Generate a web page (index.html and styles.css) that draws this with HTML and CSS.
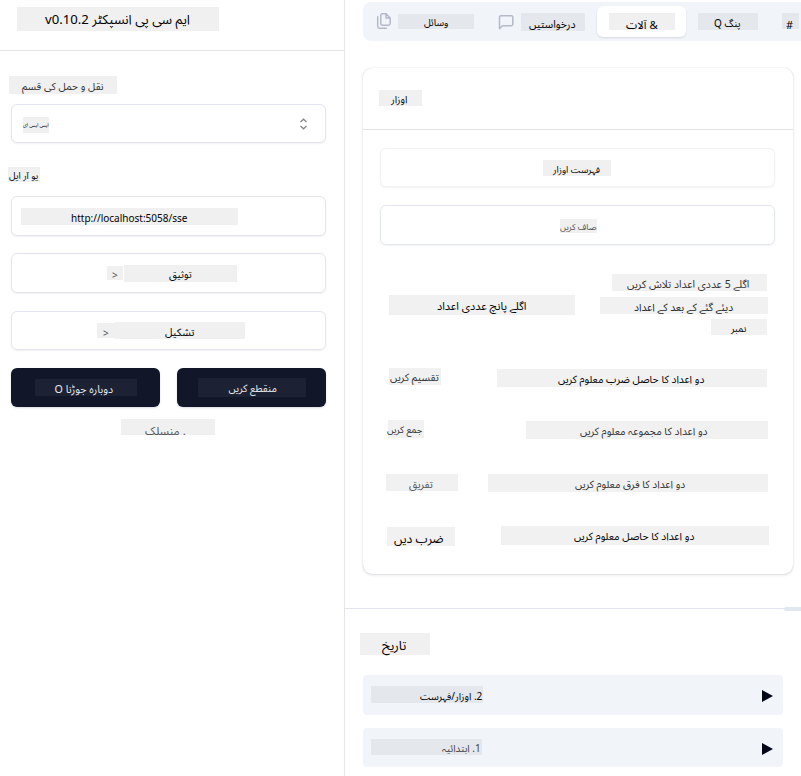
FILE: index.html
```
<!DOCTYPE html>
<html lang="ur">
<head>
<meta charset="utf-8">
<title>ایم سی پی انسپکٹر</title>
<link rel="stylesheet" href="styles.css">
</head>
<body>
<div class="app">
  <aside class="sidebar">
    <header class="side-head"><h1 class="chip c-title"><span dir="rtl">ایم سی پی انسپکٹر v0.10.2</span></h1></header>
    <div class="side-body">
      <div class="chip c-transport"><span dir="rtl">نقل و حمل کی قسم</span></div>
      <div class="field select">
        <div class="chip c-sse"><span dir="rtl">ایس ایس ای</span></div>
        <svg class="chevrons" viewBox="0 0 9 12"><path d="M1.500 4 4.500 1.200 7.500 4M1.500 8 4.500 10.800 7.500 8"/></svg>
      </div>
      <div class="chip c-url"><span dir="rtl">یو آر ایل</span></div>
      <div class="field input"><div class="chip c-addr"><span>http://localhost:5058/sse</span></div></div>
      <div class="field auth"><div class="chip c-gt1"><span>&gt;</span></div><div class="chip c-auth"><span dir="rtl">توثیق</span></div></div>
      <div class="field config"><div class="chip c-gt2"><span>&gt;</span></div><div class="chip c-config"><span dir="rtl">تشکیل</span></div></div>
      <div class="actions">
        <button class="dark"><span class="chip c-reconnect"><span dir="rtl">دوبارہ جوڑنا O</span></span></button>
        <button class="dark"><span class="chip c-disconnect"><span dir="rtl">منقطع کریں</span></span></button>
      </div>
      <div class="chip c-status"><span dir="ltr">منسلک .</span></div>
    </div>
  </aside>
  <main class="main">
    <section class="top">
      <nav class="tabs">
        <svg class="icon files" viewBox="0 0 16 18"><path d="M10 1.700H6.500A1.700 1.700 0 0 0 4.800 3.400v8.200A1.700 1.700 0 0 0 6.500 13.300h6A1.700 1.700 0 0 0 14.200 11.600V6ZM10 1.700V6H14.200M1.700 4.800v9.700A1.700 1.700 0 0 0 3.400 16.200H10.500"/></svg>
        <div class="chip c-resources"><span dir="rtl">وسائل</span></div>
        <svg class="icon message" viewBox="0 0 16 16"><path d="M14.800 10.200A1.500 1.500 0 0 1 13.300 11.700H4.500L1.500 14.700V3.200A1.500 1.500 0 0 1 3 1.700h10.300a1.500 1.500 0 0 1 1.500 1.500Z"/></svg>
        <div class="chip c-prompts"><span dir="rtl">درخواستیں</span></div>
        <div class="tab-active"><div class="chip c-tools"><span dir="ltr">آلات &amp;</span></div></div>
        <div class="chip c-ping"><span dir="rtl">پنگ Q</span></div>
        <div class="chip c-hash"><span>#</span></div>
      </nav>
      <div class="card">
        <div class="card-head"><h2 class="chip c-card"><span dir="rtl">اوزار</span></h2></div>
        <div class="wide list"><div class="chip c-list"><span dir="rtl">فہرست اوزار</span></div></div>
        <div class="wide clear"><div class="chip c-clear"><span dir="rtl">صاف کریں</span></div></div>
        <div class="tool t1">
          <div class="chip c-next"><span dir="rtl">اگلے پانچ عددی اعداد</span></div>
          <div class="desc">
            <div class="chip c-d1a"><span dir="rtl">اگلے 5 عددی اعداد تلاش کریں</span></div>
            <div class="chip c-d1b"><span dir="rtl">دیئے گئے کے بعد کے اعداد</span></div>
            <div class="chip c-d1c"><span dir="rtl">نمبر</span></div>
          </div>
        </div>
        <div class="tool t2"><div class="chip c-n2"><span dir="rtl">تقسیم کریں</span></div><div class="chip c-d2"><span dir="rtl">دو اعداد کا حاصل ضرب معلوم کریں</span></div></div>
        <div class="tool t3"><div class="chip c-n3"><span dir="rtl">جمع کریں</span></div><div class="chip c-d3"><span dir="rtl">دو اعداد کا مجموعہ معلوم کریں</span></div></div>
        <div class="tool t4"><div class="chip c-n4"><span dir="rtl">تفریق</span></div><div class="chip c-d4"><span dir="rtl">دو اعداد کا فرق معلوم کریں</span></div></div>
        <div class="tool t5"><div class="chip c-n5"><span dir="rtl">ضرب دیں</span></div><div class="chip c-d5"><span dir="rtl">دو اعداد کا حاصل معلوم کریں</span></div></div>
      </div>
    </section>
    <section class="history">
      <div class="handle"></div>
      <h2 class="chip c-history"><span dir="rtl">تاریخ</span></h2>
      <div class="entry e1"><div class="chip c-h2"><span dir="rtl">2. اوزار/فہرست</span></div><i class="arrow"></i></div>
      <div class="entry e2"><div class="chip c-h1"><span dir="rtl">1. ابتدائیہ</span></div><i class="arrow"></i></div>
    </section>
  </main>
</div>
</body>
</html>
```
FILE: styles.css
```
* { box-sizing: border-box; margin: 0; }
body { width: 801px; height: 776px; overflow: hidden; background: #fff; color: #000; font-family: "Noto Sans", "Noto Sans Arabic", "DejaVu Sans", sans-serif; font-size: 10px; }
.app { display: flex; height: 776px; }
.sidebar { width: 345px; flex: none; border-right: 1px solid #e2e5f0; }
.main { flex: 1; min-width: 0; }

.chip { display: flex; align-items: center; flex: none; background: #f0f0f0; font-size: 10px; font-weight: 400; line-height: 1; white-space: nowrap; }
.chip > span { display: block; }

.side-head { height: 51px; padding: 7px 0 0 17px; border-bottom: 1px solid #e2e5ec; }
.side-body { padding: 25px 18px 0 8px; }
.field { display: flex; align-items: flex-start; width: 315px; margin-left: 3px; border: 1px solid #e2e5f0; border-radius: 6px; box-shadow: 0 1px 2px rgba(15, 23, 42, .06); }
.select { height: 39px; margin-top: 10px; padding: 12px 0 0 11px; }
.chevrons { width: 9px; height: 12px; margin: 1px 0 0 250px; fill: none; stroke: #888; stroke-width: 1.300; }
.input { height: 40px; margin-top: 14px; padding: 11px 0 0 9px; }
.auth { height: 40px; margin-top: 17px; padding: 11px 0 0 95px; gap: 1px; }
.config { height: 39px; margin-top: 18px; padding: 10px 0 0 85px; }
.actions { display: flex; gap: 17px; margin: 18px 0 0 3px; }
.dark { display: flex; align-items: center; justify-content: center; width: 149px; height: 39px; padding: 0; border: 0; border-radius: 6px; background: #111629; font: inherit; box-shadow: 0 1px 2px rgba(15, 23, 42, .15); }
.dark .chip { background: #1c2133; color: #e8eaf0; }

.c-title { width: 202px; height: 24px; padding: 2px 0 0 28px; font-size: 13.150px; }
.c-transport { width: 108px; height: 18px; margin-left: 1px; padding: 2px 0 0 13px; font-size: 10.350px; color: #333; }
.c-sse { width: 26px; height: 16px; padding-top: 1px; font-size: 5px; }
.c-url { width: 32px; height: 15px; margin-top: 24px; padding: 2px 0 0 1px; font-size: 9.300px; }
.c-addr { width: 217px; height: 17px; padding: 2px 0 0 50px; }
.c-gt1 { width: 16px; height: 14px; margin-top: 1px; padding: 3px 0 0 5px; color: #555; }
.c-auth { width: 113px; height: 17px; padding: 2px 0 0 45px; font-size: 10.100px; }
.c-gt2 { width: 18px; height: 15px; margin-top: 1px; padding: 5px 0 0 6px; color: #555; }
.c-config { width: 130px; height: 17px; padding: 4px 0 0 50px; font-size: 10.700px; }
.c-reconnect { width: 102px; height: 17px; padding: 4px 0 0 20px; font-size: 10.700px; }
.c-disconnect { width: 108px; height: 19px; padding: 2px 0 0 31px; font-size: 10.400px; }
.c-status { width: 94px; height: 16px; margin: 12px 0 0 113px; padding: 7px 0 0 24px; font-size: 11.600px; color: #555; }

.top { height: 608px; padding: 2px 0 0 18px; }
.tabs { display: flex; align-items: flex-start; height: 39px; padding-left: 13px; border-radius: 8px 0 0 8px; background: #f1f5fa; overflow: hidden; }
.tabs .chip { margin-top: 11px; background: #e4e7eb; }
.icon { flex: none; fill: none; stroke: #b4b9c8; stroke-width: 1.500; stroke-linejoin: round; stroke-linecap: round; }
.files { width: 16px; height: 18px; margin-top: 10px; }
.message { width: 16px; height: 16px; margin: 12px 0 0 24px; }
.tabs .c-resources { width: 76px; height: 15px; margin: 12px 0 0 6px; padding: 3px 0 0 26px; font-size: 9.700px; }
.tabs .c-prompts { width: 64px; height: 18px; margin-left: 7px; padding: 4px 0 0 8px; font-size: 10.700px; }
.tab-active { flex: none; width: 89px; height: 31px; margin: 4px 0 0 12px; padding-left: 12px; border-radius: 6px; background: #fff; box-shadow: 0 1px 2px rgba(15, 23, 42, .12); }
.tabs .c-tools { width: 66px; height: 17px; margin-top: 7px; padding: 6px 0 0 17px; background: #f0f0f0; font-size: 11.300px; }
.tabs .c-ping { width: 60px; height: 17px; margin-left: 12px; padding: 2px 0 0 16px; }
.tabs .c-hash { width: 17px; height: 16px; margin-left: 24px; padding: 6px 0 0 4px; font-size: 11px; }

.card { width: 430px; height: 506px; margin-top: 27px; border-radius: 9px; box-shadow: 0 0 1px rgba(15, 23, 42, .18), 0 1px 3px rgba(15, 23, 42, .14); }
.card-head { height: 62px; padding: 22px 0 0 16px; border-bottom: 1px solid #e4e4e7; }
.c-card { width: 43px; height: 16px; padding: 2px 0 0 12px; }
.wide { display: flex; align-items: flex-start; width: 395px; margin-left: 17px; border-radius: 6px; box-shadow: 0 1px 2px rgba(15, 23, 42, .05); }
.list { height: 39px; margin-top: 18px; padding: 11px 0 0 162px; border: 1px solid #f0f1f4; }
.clear { height: 40px; margin-top: 18px; padding: 13px 0 0 179px; border: 1px solid #e2e6ef; }
.c-list { width: 68px; height: 16px; padding: 4px 0 0 10px; font-size: 9.400px; }
.c-clear { width: 37px; height: 14px; padding-top: 2px; font-size: 8.600px; color: #555; }
.tool { display: flex; justify-content: space-between; align-items: flex-start; padding: 0 25px 0 24px; height: 53px; }
.tool .chip { background: #f1f1f1; }
.tool.t1 { height: 95px; margin-top: 29px; padding-left: 26px; }
.tool.t2 { height: 52px; }
.tool.t4 { height: 52px; padding-left: 23px; }
.tool.t5 { padding-right: 24px; }
.desc { display: flex; flex-direction: column; align-items: flex-end; width: 168px; }
.c-next { width: 186px; height: 20px; margin-top: 21px; padding-left: 48px; font-size: 11px; }
.c-d1a { width: 155px; height: 17px; margin-right: 1px; padding: 4px 0 0 15px; font-size: 10.600px; color: #333; }
.c-d1b { width: 168px; height: 17px; margin-top: 6px; padding: 3px 0 0 34px; font-size: 10.450px; color: #222; }
.c-d1c { width: 56px; height: 16px; margin: 5px 1px 0 0; padding: 3px 0 0 20px; font-size: 9.600px; }
.c-n2 { width: 52px; height: 17px; margin: -1px 0 0 2px; padding: 2px 0 0 1px; font-size: 10.500px; color: #333; }
.c-d2 { width: 270px; height: 18px; margin-right: 1px; padding: 3px 0 0 61px; font-size: 10.400px; }
.c-n3 { width: 36px; height: 18px; margin: -1px 0 0 1px; padding-top: 2px; font-size: 9.400px; color: #333; }
.c-n3 > span { margin-left: -1px; }
.c-d3 { width: 242px; height: 18px; padding: 2px 0 0 54px; font-size: 10.450px; color: #333; }
.c-n4 { width: 72px; height: 17px; padding: 4px 0 0 23px; font-size: 10.500px; color: #555; }
.c-d4 { width: 280px; height: 18px; padding: 3px 0 0 87px; font-size: 10.400px; color: #333; }
.c-n5 { width: 68px; height: 19px; margin-top: 1px; padding: 5px 0 0 7px; font-size: 12.200px; }
.c-d5 { width: 268px; height: 19px; padding: 1px 0 0 73px; font-size: 10.450px; }

.history { height: 168px; padding: 24px 0 0 15px; border-top: 1px solid #e2e5f0; position: relative; }
.handle { position: absolute; top: -2px; right: 0; width: 17px; height: 4px; border-radius: 2px 0 0 2px; background: #e2e8f0; }
.c-history { width: 70px; height: 22px; padding: 2px 0 0 22px; font-size: 13px; }
.entry { display: flex; align-items: flex-start; justify-content: space-between; width: 420px; margin-left: 3px; padding: 11px 10px 0 8px; border-radius: 4px; background: #f1f5fa; }
.entry .chip { background: #e4e7eb; }
.e1 { height: 40px; margin-top: 20px; }
.e2 { height: 39px; margin-top: 13px; }
.c-h2 { width: 112px; height: 17px; padding: 2px 0 0 49px; }
.c-h1 { width: 111px; height: 16px; padding: 2px 0 0 71px; color: #444; }
.arrow { width: 11px; height: 12px; margin-top: 4px; background: #020817; clip-path: polygon(0 0, 100% 50%, 0 100%); }
```
